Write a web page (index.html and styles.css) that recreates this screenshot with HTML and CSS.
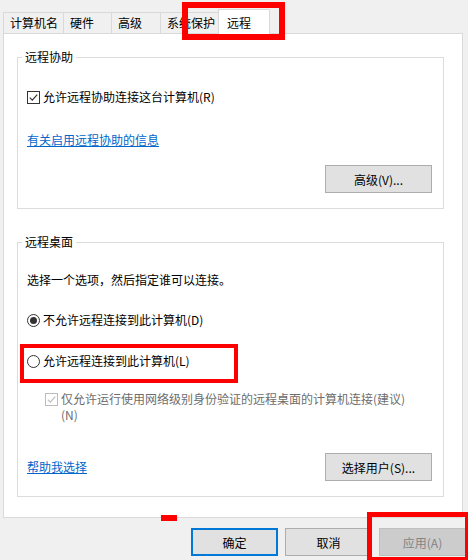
FILE: index.html
```html
<!DOCTYPE html>
<html lang="zh-CN">
<head>
    <meta charset="UTF-8">
    <meta name="viewport" content="width=device-width, initial-scale=1.0">
    <title>系统属性</title>
    <link rel="stylesheet" href="styles.css">
</head>
<body>
    <div class="tabs">
        <div class="tab tab-name">计算机名</div>
        <div class="tab tab-hw">硬件</div>
        <div class="tab tab-adv">高级</div>
        <div class="tab tab-prot">系统保护</div>
        <div class="tab tab-remote active">远程</div>
    </div>

    <div class="panel">
        <fieldset class="group group-assist">
            <legend>远程协助</legend>
            <div class="option first">
                <svg class="box" width="13" height="13" viewBox="0 0 13 13">
                    <rect x="0.5" y="0.5" width="12" height="12" fill="#fff" stroke="#333"/>
                    <path d="M2.8 6.6 L5.3 9.1 L10.2 3.6" fill="none" stroke="#333" stroke-width="1.2"/>
                </svg>
                <span>允许远程协助连接这台计算机(R)</span>
            </div>
            <a class="link info-link" href="#">有关启用远程协助的信息</a>
            <div class="actions">
                <button class="btn">高级(V)...</button>
            </div>
        </fieldset>

        <fieldset class="group group-desktop">
            <legend>远程桌面</legend>
            <p class="hint">选择一个选项，然后指定谁可以连接。</p>
            <div class="option deny">
                <svg class="box" width="13" height="13" viewBox="0 0 13 13">
                    <circle cx="6.5" cy="6.5" r="6" fill="#fff" stroke="#333"/>
                    <circle cx="6.5" cy="6.5" r="3.5" fill="#333"/>
                </svg>
                <span>不允许远程连接到此计算机(D)</span>
            </div>
            <div class="option allow">
                <svg class="box" width="13" height="13" viewBox="0 0 13 13">
                    <circle cx="6.5" cy="6.5" r="6" fill="#fff" stroke="#333"/>
                </svg>
                <span>允许远程连接到此计算机(L)</span>
            </div>
            <div class="option nla disabled">
                <svg class="box" width="13" height="13" viewBox="0 0 13 13">
                    <rect x="0.5" y="0.5" width="12" height="12" fill="#fff" stroke="#bcbcbc"/>
                    <path d="M2.8 6.6 L5.3 9.1 L10.2 3.6" fill="none" stroke="#bcbcbc" stroke-width="1.2"/>
                </svg>
                <span>仅允许运行使用网络级别身份验证的远程桌面的计算机连接(建议)<br>(N)</span>
            </div>
            <div class="actions split">
                <a class="link" href="#">帮助我选择</a>
                <button class="btn">选择用户(S)...</button>
            </div>
        </fieldset>
    </div>

    <div class="footer">
        <button class="btn wide default">确定</button>
        <button class="btn wide">取消</button>
        <button class="btn wide" disabled>应用(A)</button>
    </div>

    <!-- red highlight marks -->
    <div class="mark mark-tab"></div>
    <div class="mark mark-allow"></div>
    <div class="mark mark-apply"></div>
    <div class="mark mark-dash"></div>
</body>
</html>
```

FILE: styles.css
```css
body {
    margin: 0;
    width: 468px;
    height: 560px;
    overflow: hidden;
    position: relative;
    font-family: "Noto Sans CJK SC", sans-serif;
    font-size: 12px;
    line-height: 16px;
    color: #000;
    background-color: #f0f0f0;
}

/* tab strip */
.tabs {
    display: flex;
    align-items: flex-end;
    height: 33px;
    padding-left: 3px;
}
.tab {
    box-sizing: border-box;
    height: 21px;
    padding-left: 6px;
    line-height: 20px;
    border: 1px solid #d9d9d9;
    border-bottom: none;
    background-color: #f0f0f0;
    white-space: nowrap;
}
.tab + .tab {
    margin-left: -1px;
}
.tab-name { width: 61px; }
.tab-hw { width: 49px; }
.tab-adv { width: 50px; }
.tab-prot { width: 61px; }
.tab.active {
    position: relative;
    z-index: 1;
    width: 52px;
    height: 25px;
    margin-left: -3px;
    margin-bottom: -1px;
    padding-left: 8px;
    padding-top: 3px;
    background-color: #fff;
}

/* page body */
.panel {
    margin: 0 5px 0 3px;
    padding: 15px 18px 20px 13px;
    border: 1px solid #d9d9d9;
    background-color: #fff;
}
.group {
    margin: 0;
    min-width: 0;
    padding: 0 11px 15px 9px;
    border: 1px solid #dcdcdc;
}
.group legend {
    margin-left: -5px;
    padding: 0 3px;
    line-height: 16px;
}
.group-desktop {
    margin-top: 25px;
}

.option {
    display: flex;
    align-items: flex-start;
    gap: 3px;
}
.option .box {
    flex: none;
    margin-top: 2px;
}
.option.first { margin-top: 24px; }
.option.deny { margin-top: 24px; }
.option.allow { margin-top: 25px; }
.option.nla {
    margin-top: 22px;
    margin-left: 18px;
}
.option.disabled {
    color: #6d6d6d;
}

.hint {
    margin: 22px 0 0;
}

.link {
    color: #0066cc;
    text-decoration: underline;
}
.info-link {
    display: inline-block;
    margin-top: 27px;
}

.actions {
    display: flex;
    justify-content: flex-end;
    align-items: center;
    margin-top: 17px;
}
.actions.split {
    justify-content: space-between;
    margin-top: 30px;
}

.btn {
    box-sizing: border-box;
    width: 107px;
    height: 28px;
    padding: 0;
    font-family: inherit;
    font-size: 12px;
    color: #000;
    background-color: #e1e1e1;
    border: 1px solid #adadad;
}
.btn.wide {
    width: 87px;
}
.btn.default {
    border: 2px solid #0078d7;
}
.btn:disabled {
    color: #838383;
    background-color: #cccccc;
    border-color: #bfbfbf;
}

.footer {
    display: flex;
    justify-content: flex-end;
    gap: 7px;
    margin-top: 10px;
    padding-right: 2px;
}

/* red highlight marks */
.mark {
    position: absolute;
    box-sizing: border-box;
    border: 6px solid #ff0000;
}
.mark-tab {
    left: 182px;
    top: 2px;
    width: 103px;
    height: 38px;
}
.mark-allow {
    left: 20px;
    top: 344px;
    width: 218px;
    height: 39px;
    border-width: 4px;
}
.mark-apply {
    left: 367px;
    top: 512px;
    width: 103px;
    height: 50px;
    border-width: 5px;
}
.mark-dash {
    left: 161px;
    top: 515px;
    width: 16px;
    height: 6px;
    border: none;
    background-color: #ff0000;
}
```
